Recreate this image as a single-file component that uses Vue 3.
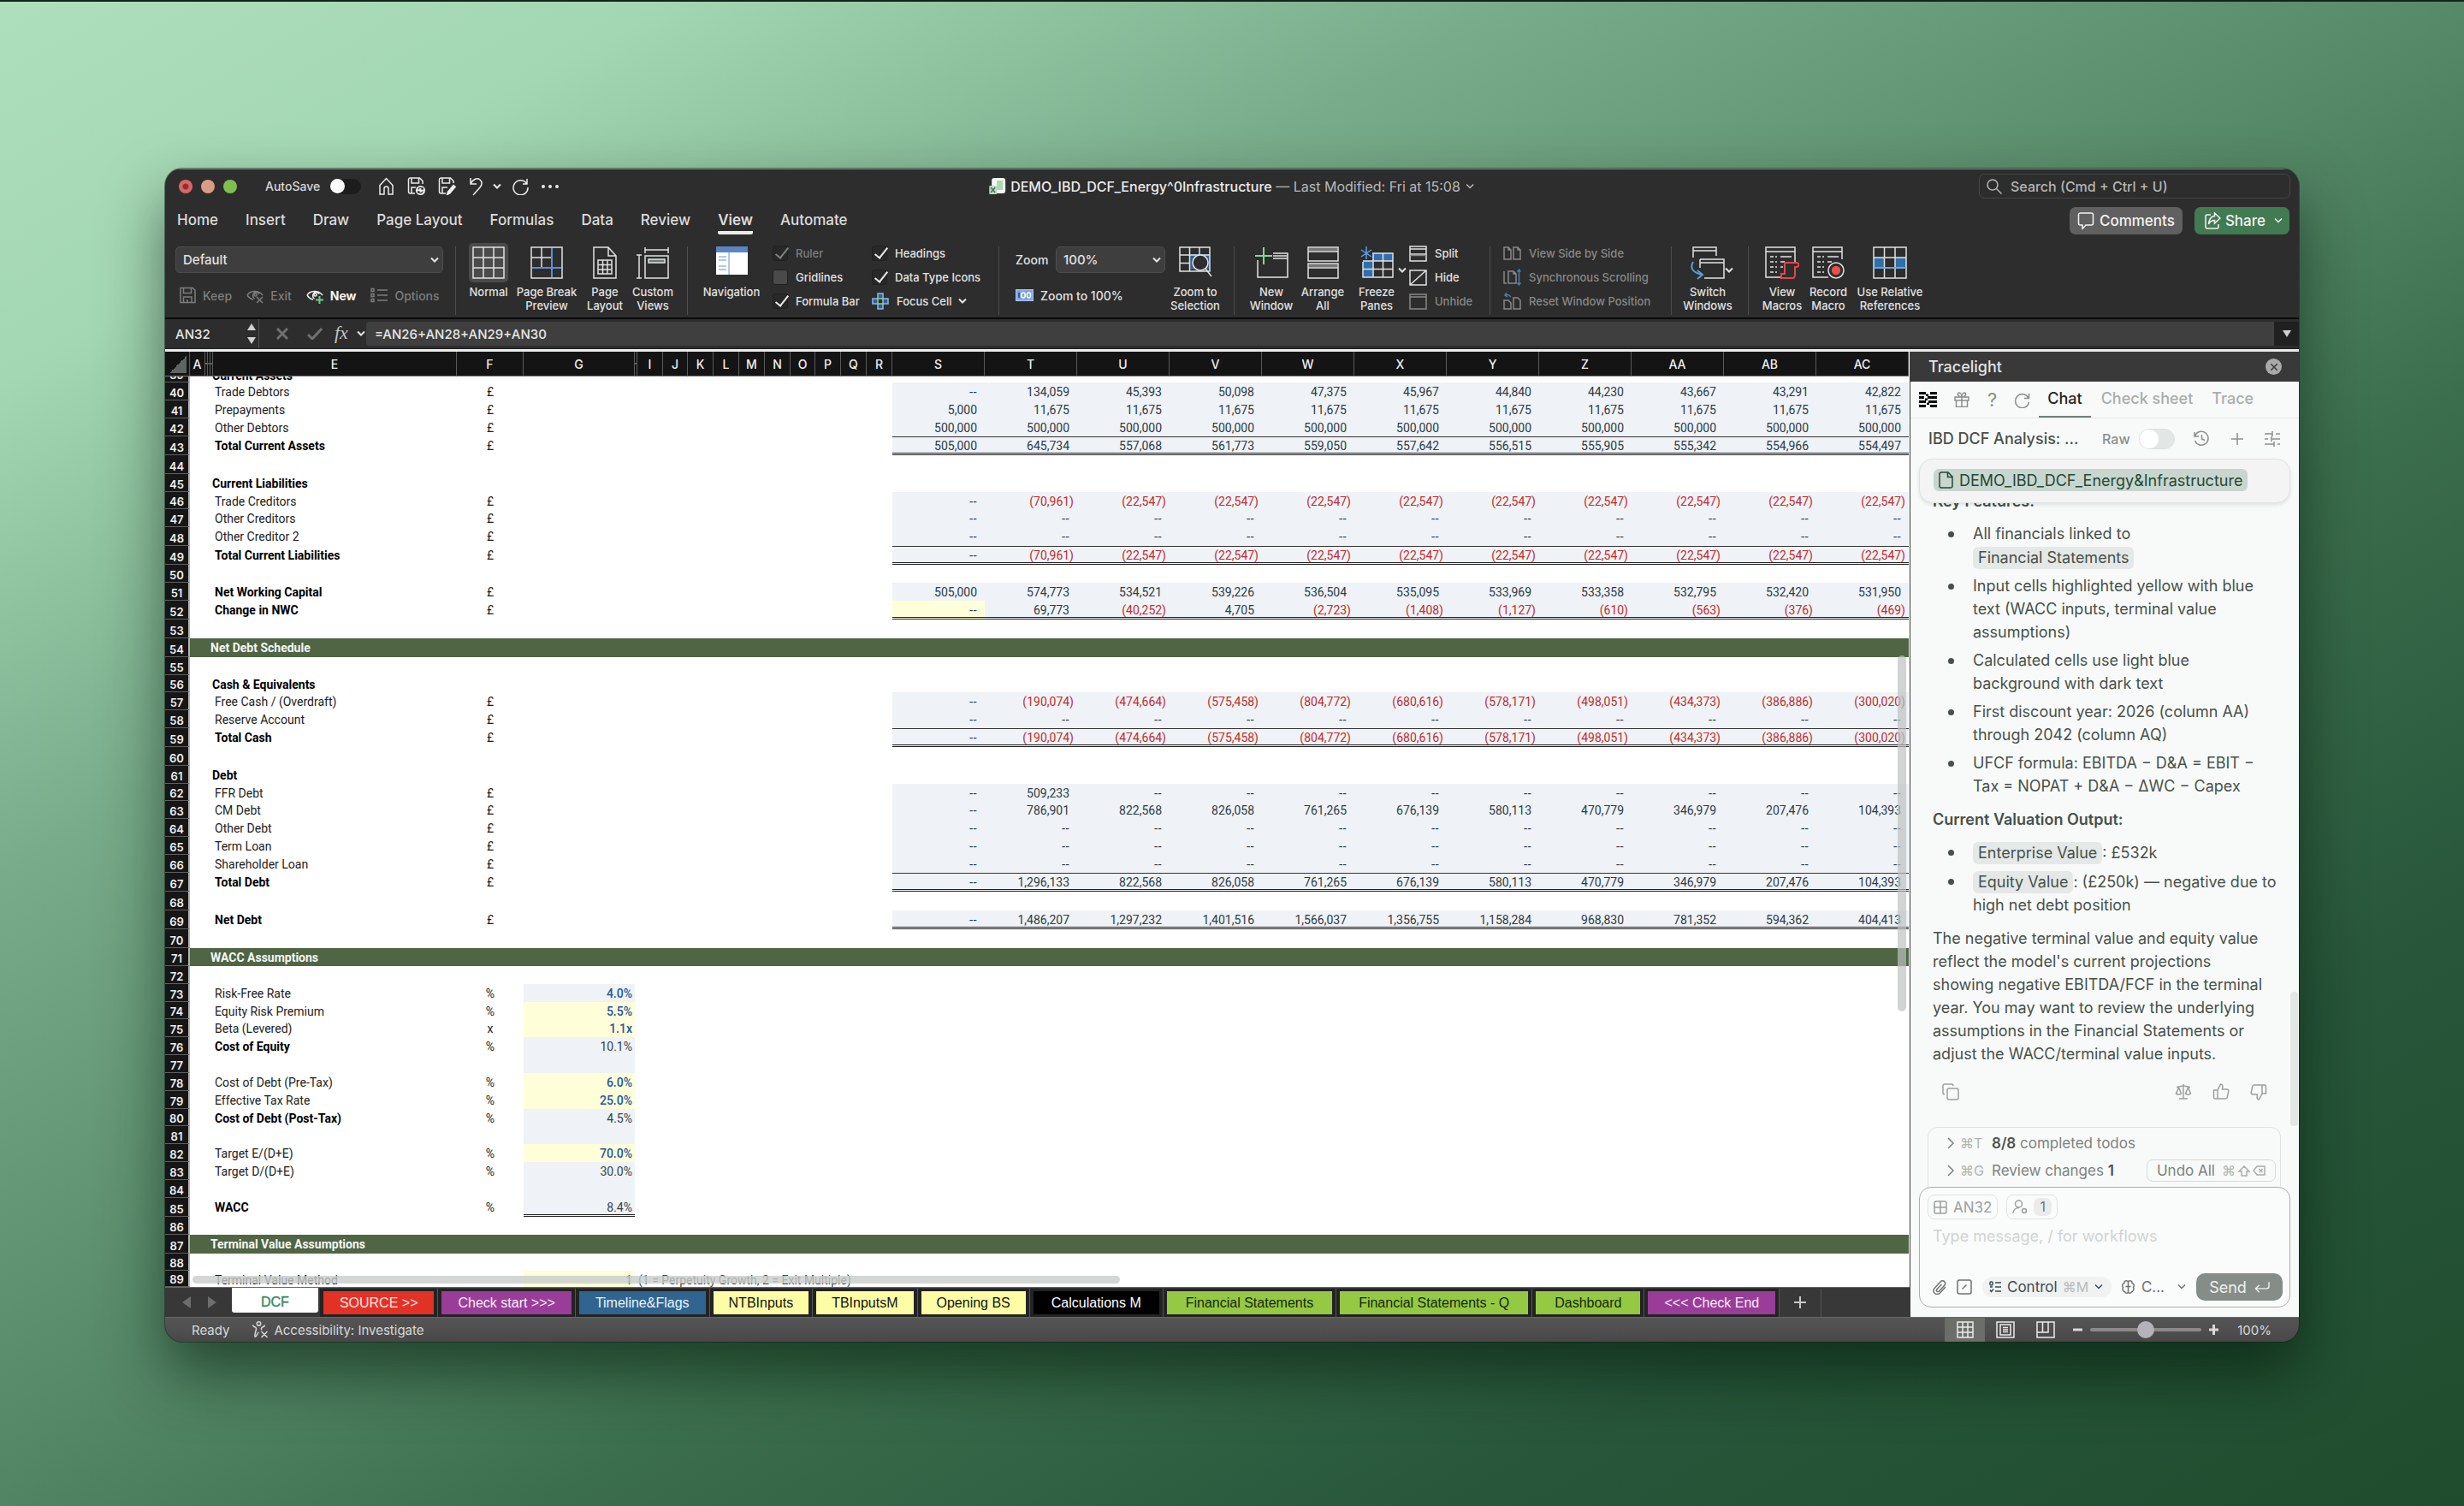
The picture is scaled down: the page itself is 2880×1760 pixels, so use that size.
<script setup>
const icons = {
  home: '<path d="M2 9.5 9.5 1.5 17 9.5V20h-5v-6.5a2.5 2.5 0 0 0-5 0V20H2Z"/>',
  save: '<path d="M9 19H3.500a2 2 0 0 1-2-2V3a2 2 0 0 1 2-2h11L18 4.500V8M5 1v6h8.500V1M5 19v-7h5"/><circle cx="15.500" cy="15.500" r="5.500" fill="#f0f0f0" stroke="none"/><path stroke="#2d2d2d" stroke-width="1.200" d="M12.700 14.500a3 3 0 0 1 5.400-.700m.200-1.600v2h-2M18.300 16.500a3 3 0 0 1-5.400.700m-.2 1.600v-2h2"/>',
  saveAs: '<path d="M9 19H3.500a2 2 0 0 1-2-2V3a2 2 0 0 1 2-2h11L18 4.500V7M5 1v6h8.500V1M5 19v-7h6"/><path fill="#f0f0f0" stroke="#f0f0f0" d="m10.500 20.500 1-3.500 6.500-7.500 2.200 1.800-6.500 7.700Z"/>',
  undo: '<path d="M2 1v7h7M2 8c3-6 8-7.500 11-5 3.500 3 2 6.500 0 9l-8 9"/>',
  redo: '<path d="M18 2v6h-5M17.500 7.500A8.500 8.500 0 1 0 19 12"/>',
  chev: '<path d="m2 3.500 4 4 4-4"/>',
  keep: '<path d="M2 1.500h14L19 4v14.500H2ZM5.500 1.500v6h9v-6M5.500 18.500V12h9.500v6.500M10 15v3"/>',
  eye: '<path d="M1 10c3-5.500 13-6.500 18 0M1 10c2 3 4 4.500 7 5M15 8.500a4 4 0 1 0-5.500 5.500"/><circle cx="10.500" cy="9.500" r="1.600"/>',
  list: '<path d="M8 4h12M8 10h12M8 16h12"/><path d="M1 2.500h3v3H1ZM1 8.500h3v3H1ZM1 14.500h3v3H1Z"/>',
  gridBig: '<path d="M1 1h36v36H1ZM13 1v36M25 1v36M1 13h36M1 25h36"/>',
  pageBreak: '<path d="M1 1h36v36H1ZM13 1v24M1 13h24"/><path stroke="#5b8fd6" stroke-width="2" d="M25 2v34M2 25h34"/>',
  pageLayout: '<path d="M1 1h17l9 10v26H1ZM18 1v10h9M6 16h16v16H6ZM11.500 16v16M17 16v16M6 21.500h16M6 27h16"/>',
  custom: '<path d="M10 4h27M10 1v7M37 1v7M3 10v27M0 10h6M0 37h6M10 11h27v26H10Z"/><path fill="#6d7a70" d="M14 15h19v4H14Z"/>',
  nav: '<path fill="#fff" stroke="none" d="M0 0h37v33H0Z"/><path fill="#5b84c4" stroke="none" d="M0 0h37v7H0Z"/><path stroke="#6d90c4" stroke-width="1" d="M15 7v26M3 12h9M3 16h9M3 23h9M3 27h9"/>',
  focus: '<path fill="#2f5f98" stroke="#8ab9ea" d="M7 1h6v6h6v6h-6v6H7v-6H1V7h6Z"/><path fill="#2d2d2d" stroke="#8fd08f" d="M7 7h6v6H7Z"/>',
  hundred: '<path fill="#7ea2dc" stroke="#a7c3f0" d="M.500.500h20v13H.500Z"/><path stroke="#1f4580" d="M4 4v6"/><rect x="7" y="4" width="4" height="6" rx="2" stroke="#fff"/><rect x="13.500" y="4" width="4" height="6" rx="2" stroke="#fff"/>',
  zoomSel: '<path fill="#2f6296" stroke="none" d="M12 9h24v18H12Z"/><path d="M1 1h35v28H1ZM12.500 1v28M24 1v9M1 10h35M1 19.500h12"/><circle cx="25" cy="19" r="9" fill="#2d2d2d" /><path d="m31 26 7 9"/>',
  newWin: '<path d="M21 8h17v28H3V16M21 14h17M21 11h17"/><path stroke="#7fd79b" stroke-width="2" d="M0 11h20M10 1v20"/>',
  arrange: '<path d="M1 1h35v16H1ZM1 20h35v17H1ZM1 6h35M1 25h35"/><path stroke="#777" stroke-width="3" d="M2 3.500h33M2 22.500h33"/>',
  freeze: '<path fill="#2f6fae" stroke="none" d="M14 8h24v9H14ZM3 17h12v19H3Z"/><path d="M14 8h24v28H3V18M3 17h35M3 26.500h35M15 8v28M26.500 8v28"/><path stroke="#5da0e6" d="M7 0v15M1 4l12 8M13 4 1 12"/>',
  split: '<path d="M1 1h19v17H1ZM1 4h19M1 10h19"/><path stroke="#888" d="M1 11.500h19"/>',
  hide: '<path d="M1 1h19v17H1ZM1 18 20 1"/>',
  unhide: '<path d="M1 1h19v17H1ZM1 4h19"/>',
  side: '<path d="M1 3h5l3 3v11H1ZM12 3h5l3 3v11h-8ZM6 3v3h3M17 3v3h3"/>',
  sync: '<path d="M1 3v14h3M6 3h6l3 3v11H6ZM12 3v3h3"/><path stroke="#4b7ca6" d="M18.500 1v18M16.500 3.500l2-2.500 2 2.500M16.500 16.500l2 2.500 2-2.500"/>',
  reset: '<path d="M1 9h5l3 3v7H1ZM12 6h5l3 3v10h-8Z"/><path stroke="#4b7ca6" d="M9 5C7 2 5 2 2 3M4 0 2 3l3 2"/>',
  switch: '<path d="M30 11V1H3v12M3 5h27M11 15h28v22H16M11 15v10M11 19h28"/><path stroke="#5b9bd5" stroke-width="2" d="M3 18c-4 7-1 12 10 15M8 28l6 5-6 5"/>',
  viewMac: '<path d="M19 36H1V1h34v18M1 6h34"/><path stroke-dasharray="4 2" d="M6 12h8M6 18h8M6 24h8M6 30h8"/><path d="M18 12h13M18 18h5M18 24h3"/><path stroke="#e0474f" stroke-width="2" d="M24 19h13c3 0 3 5 0 5h-2v9c0 5-4 4-4 4H19v-5h4V21c0-1 0-2 1-2Z"/>',
  recMac: '<path d="M19 36H1V1h34v14M1 6h34"/><path stroke-dasharray="4 2" d="M6 12h8M6 18h8M6 24h8M6 30h8"/><path d="M18 12h13M18 18h5"/><circle cx="28" cy="28" r="9" fill="#2d2d2d"/><circle cx="28" cy="28" r="4.500" fill="#e8504c" stroke="#e8504c"/>',
  relRef: '<path fill="#2f6fae" stroke="none" d="M1 13h12v12H1ZM26 13h13v12H26Z"/><path d="M1 1h38v36H1ZM13.500 1v36M26 1v36M1 13h38M1 25h38"/><path stroke="#5b9bd5" d="M1 25h38"/>',
  search: '<circle cx="7" cy="7" r="6"/><path d="m11.500 11.500 6 6"/>',
  comment: '<path d="M3.500 1h13a2 2 0 0 1 2 2v10a2 2 0 0 1-2 2H10l-4 4.500V15H3.500a2 2 0 0 1-2-2V3a2 2 0 0 1 2-2Z"/>',
  share: '<path d="M8 3H4a2 2 0 0 0-2 2v12a2 2 0 0 0 2 2h11a2 2 0 0 0 2-2v-3M12.500 1l6.500 6-6.500 6V9.500C9 9.500 7 11 5.500 14 6 8.500 8.500 5 12.500 4.500Z"/>',
  access: '<circle cx="8" cy="3" r="2.200"/><path d="M1 4.500C1 7 5 6.500 5 8.500c0 3-2.500 8-1.500 9.500 1.500 1 3-5 4.500-5M15 4.500C15 7 11 6.500 11 8.500v2M11 12l7 7M18 12l-7 7"/>',
  v1: '<path d="M1 1h18v18H1ZM7 1v18M13 1v18M1 7h18M1 13h18"/>',
  v2: '<path d="M1 1h20v18H1ZM5 4h12v12H5ZM8 7.500h6M8 10h6M8 12.500h6"/>',
  v3: '<path d="M1 1h20v18H1ZM1 13h13V1M7.500 1v12"/>',
  tl: '<path fill="#000" stroke="none" d="M0 0h8v3H0ZM13 0h8v3h-8ZM8 2.500h3V5H8ZM0 5h6v3H0ZM10 5h11v3H10ZM7 7.500h3V10H7ZM11 10h10v3H11ZM0 10h8v3H0ZM9 12.500h3V15H9ZM0 15h8v3H0ZM13 15h8v3h-8Z"/>',
  gift: '<path d="M1 6h16v4H1ZM2.500 10v7.500h13V10M9 6v11.500M9 6C4 6 3 1 6 1c2 0 3 3 3 5 0-2 1-5 3-5 3 0 2 5-3 5Z"/>',
  refresh: '<path d="M17.500 2v5.500H12M17 7.500A8 8 0 1 0 17.500 12"/>',
  history: '<path d="M1 2v5h5M1.500 6.500A8 8 0 1 1 1.500 12M9.500 5v5l3.500 1.500"/>',
  sliders: '<path d="M0 3h9M13 3h5M9 0v6M0 9h4M8 9h10M8 6v6M0 15h11M15 15h3M11 12v6"/>',
  file: '<path d="M3 1h8l5 5v11a2 2 0 0 1-2 2H3a2 2 0 0 1-2-2V3a2 2 0 0 1 2-2ZM10.500 1v5.500H16"/>',
  copy: '<rect x="6" y="6" width="13" height="13" rx="2"/><path d="M3 13a2 2 0 0 1-2-2V3a2 2 0 0 1 2-2h8a2 2 0 0 1 2 2"/>',
  scale: '<path d="M10 1v17M5 18h10M2 4.500c3 0 5-1.500 8-1.500s5 1.500 8 1.500M4.500 5l-3 7c1 1.500 5 1.500 6 0ZM15.500 5l-3 7c1 1.500 5 1.500 6 0Z"/>',
  up: '<path d="M6 8v10M1.500 8H6l3.500-7c3 0 2.500 3 2 6H17a1.800 1.800 0 0 1 1.800 2.200l-1.500 7A2 2 0 0 1 15.500 18H3a1.500 1.500 0 0 1-1.500-1.500Z"/>',
  down: '<path d="M14 12V2M18.500 12H14l-3.500 7c-3 0-2.500-3-2-6H3a1.800 1.800 0 0 1-1.800-2.200l1.500-7A2 2 0 0 1 4.500 2H17a1.500 1.500 0 0 1 1.500 1.500Z"/>',
  right: '<path d="m3 1 6 6-6 6"/>',
  shift: '<path d="M7 1 1 7h3v5h6V7h3Z"/>',
  bksp: '<path d="M5 2h9v10H5L1 7ZM7.500 5l4 4M11.500 5l-4 4"/>',
  cell: '<rect x="1" y="1" width="14" height="14" rx="2"/><path d="M8 1v14M1 8h14"/>',
  person: '<circle cx="7.500" cy="5" r="4"/><path d="M1 16c0-4 3-6.500 7-6.500"/><circle cx="14" cy="13" r="2.500"/>',
  clip: '<path d="m15 8-6.500 7C6 17.500 2.500 16.500 1.500 14.500s-.5-4 1-5.500L9 2c1.500-1.500 3.500-1.500 4.700-.200s1.200 3.200-.2 4.700L7.500 13c-.8.800-2 .8-2.700 0s-.5-1.800.2-2.500L10.500 5"/>',
  slash: '<rect x="1" y="1" width="16" height="16" rx="2"/><path d="m6.500 11.500 5-5"/>',
  ctl: '<path d="M7 3h7M7 8h7M7 13h7"/><rect x="1" y="2" width="3" height="4" rx="1"/><path d="m1 11.500 1.500 2L5 10.500M1 8h3"/>',
  brain: '<path d="M8 1.500v15M8 3C6 .500 3 2 3.500 4.500 1 5 .500 8 2 9.500.500 12 2.500 14.500 4 14.500c1 2.500 4 2 4 0M8 3c2-2.500 5-1 4.500 1.500C15 5 15.500 8 14 9.500c1.500 2.500-.5 5-2 5-1 2.500-4 2-4 0M5 8.500h6"/>',
  enter: '<path d="M18 1v5a3 3 0 0 1-3 3H2M6 4.500 1.500 9 6 13.500"/>'
}

const menu = ['Home', 'Insert', 'Draw', 'Page Layout', 'Formulas', 'Data', 'Review', 'View', 'Automate']

const columns = [
  ['A', 18], ['B', 3], ['C', 3], ['D', 3], ['E', 285], ['F', 78], ['G', 130], ['H', 3],
  ['I', 30], ['J', 29], ['K', 30], ['L', 30], ['M', 30], ['N', 30], ['O', 29], ['P', 30], ['Q', 30], ['R', 30],
  ...['S', 'T', 'U', 'V', 'W', 'X', 'Y', 'Z', 'AA', 'AB', 'AC'].map(c => [c, 108])
]

const v = s => s.split(' ')
const fill = x => Array(11).fill(x)
const T = { top: true, dbl: true, bold: true }
const rows = [
  { n: 39, h: 7, head: 'Current Assets', cut: true },
  { n: 40, h: 21, label: 'Trade Debtors', u: '£', v: v('-- 134,059 45,393 50,098 47,375 45,967 44,840 44,230 43,667 43,291 42,822') },
  { n: 41, h: 21, label: 'Prepayments', u: '£', v: ['5,000', ...Array(10).fill('11,675')] },
  { n: 42, h: 21, label: 'Other Debtors', u: '£', v: fill('500,000') },
  { n: 43, h: 22, label: 'Total Current Assets', u: '£', ...T, v: v('505,000 645,734 557,068 561,773 559,050 557,642 556,515 555,905 555,342 554,966 554,497') },
  { n: 44, h: 22 },
  { n: 45, h: 21, head: 'Current Liabilities' },
  { n: 46, h: 20, label: 'Trade Creditors', u: '£', v: ['--', '(70,961)', ...Array(9).fill('(22,547)')] },
  { n: 47, h: 21, label: 'Other Creditors', u: '£', v: fill('--') },
  { n: 48, h: 22, label: 'Other Creditor 2', u: '£', v: fill('--') },
  { n: 49, h: 22, label: 'Total Current Liabilities', u: '£', ...T, v: ['--', '(70,961)', ...Array(9).fill('(22,547)')] },
  { n: 50, h: 21 },
  { n: 51, h: 21, label: 'Net Working Capital', u: '£', bold: true, v: v('505,000 574,773 534,521 539,226 536,504 535,095 533,969 533,358 532,795 532,420 531,950') },
  { n: 52, h: 22, label: 'Change in NWC', u: '£', bold: true, dbl: true, yel: true, v: v('-- 69,773 (40,252) 4,705 (2,723) (1,408) (1,127) (610) (563) (376) (469)') },
  { n: 53, h: 22 },
  { n: 54, h: 22, band: 'Net Debt Schedule' },
  { n: 55, h: 21 },
  { n: 56, h: 20, head: 'Cash & Equivalents' },
  { n: 57, h: 21, label: 'Free Cash / (Overdraft)', u: '£', v: v('-- (190,074) (474,664) (575,458) (804,772) (680,616) (578,171) (498,051) (434,373) (386,886) (300,020)') },
  { n: 58, h: 21, label: 'Reserve Account', u: '£', v: fill('--') },
  { n: 59, h: 22, label: 'Total Cash', u: '£', ...T, v: v('-- (190,074) (474,664) (575,458) (804,772) (680,616) (578,171) (498,051) (434,373) (386,886) (300,020)') },
  { n: 60, h: 22 },
  { n: 61, h: 21, head: 'Debt' },
  { n: 62, h: 20, label: 'FFR Debt', u: '£', v: ['--', '509,233', ...Array(9).fill('--')] },
  { n: 63, h: 21, label: 'CM Debt', u: '£', v: v('-- 786,901 822,568 826,058 761,265 676,139 580,113 470,779 346,979 207,476 104,393') },
  { n: 64, h: 21, label: 'Other Debt', u: '£', v: fill('--') },
  { n: 65, h: 21, label: 'Term Loan', u: '£', v: fill('--') },
  { n: 66, h: 21, label: 'Shareholder Loan', u: '£', v: fill('--') },
  { n: 67, h: 22, label: 'Total Debt', u: '£', ...T, v: v('-- 1,296,133 822,568 826,058 761,265 676,139 580,113 470,779 346,979 207,476 104,393') },
  { n: 68, h: 22 },
  { n: 69, h: 22, label: 'Net Debt', u: '£', bold: true, dbl: true, v: v('-- 1,486,207 1,297,232 1,401,516 1,566,037 1,356,755 1,158,284 968,830 781,352 594,362 404,413') },
  { n: 70, h: 22 },
  { n: 71, h: 21, band: 'WACC Assumptions' },
  { n: 72, h: 21 },
  { n: 73, h: 21, label: 'Risk-Free Rate', u: '%', g: '4.0%', gc: 'calc blue' },
  { n: 74, h: 20, label: 'Equity Risk Premium', u: '%', g: '5.5%', gc: 'entry blue' },
  { n: 75, h: 21, label: 'Beta (Levered)', u: 'x', g: '1.1x', gc: 'entry blue' },
  { n: 76, h: 21, label: 'Cost of Equity', u: '%', bold: true, g: '10.1%', gc: 'calc' },
  { n: 77, h: 21, gc: 'calc' },
  { n: 78, h: 21, label: 'Cost of Debt (Pre-Tax)', u: '%', g: '6.0%', gc: 'entry blue' },
  { n: 79, h: 21, label: 'Effective Tax Rate', u: '%', g: '25.0%', gc: 'entry blue' },
  { n: 80, h: 20, label: 'Cost of Debt (Post-Tax)', u: '%', bold: true, g: '4.5%', gc: 'calc' },
  { n: 81, h: 21, gc: 'calc' },
  { n: 82, h: 21, label: 'Target E/(D+E)', u: '%', g: '70.0%', gc: 'entry blue' },
  { n: 83, h: 21, label: 'Target D/(D+E)', u: '%', g: '30.0%', gc: 'calc' },
  { n: 84, h: 21, gc: 'calc' },
  { n: 85, h: 22, label: 'WACC', u: '%', bold: true, g: '8.4%', gc: 'calc dbl' },
  { n: 86, h: 21 },
  { n: 87, h: 22, band: 'Terminal Value Assumptions' },
  { n: 88, h: 20 },
  { n: 89, h: 19, label: 'Terminal Value Method', g: '1', gc: 'entry blue', note: '(1 = Perpetuity Growth, 2 = Exit Multiple)' }
]

const sheets = [
  ['DCF', 'current'], ['SOURCE >>', 'red'], ['Check start >>>', 'purple'], ['Timeline&Flags', 'teal'],
  ['NTBInputs', 'yellow'], ['TBInputsM', 'yellow'], ['Opening BS', 'yellow'], ['Calculations M', 'black'],
  ['Financial Statements', 'green'], ['Financial Statements - Q', 'green'], ['Dashboard', 'green'], ['<<< Check End', 'purple']
]
</script>

<template>
  <div class="desktop">
    <div class="window">
      <header class="titlebar">
        <div class="lights"><i class="l-red"></i><i class="l-yel"></i><i class="l-grn"></i></div>
        <label class="autosave">AutoSave <input type="checkbox" class="sw dark"></label>
        <div class="quick">
          <button aria-label="Home"><svg class="ic" width="19" height="21" viewBox="0 0 19 21" v-html="icons.home" /></button>
          <button aria-label="Save"><svg class="ic" width="21" height="21" viewBox="0 0 21 21" v-html="icons.save" /></button>
          <button aria-label="Save as"><svg class="ic" width="21" height="21" viewBox="0 0 21 21" v-html="icons.saveAs" /></button>
          <button aria-label="Undo" class="undo"><svg class="ic" width="18" height="22" viewBox="0 0 18 22" v-html="icons.undo" /><svg class="ic thick" width="12" height="12" viewBox="0 0 12 12" v-html="icons.chev" /></button>
          <button aria-label="Redo"><svg class="ic" width="20" height="21" viewBox="0 0 20 21" v-html="icons.redo" /></button>
          <button aria-label="More" class="dots"><i></i><i></i><i></i></button>
        </div>
        <div class="doc">
          <svg width="20" height="20" viewBox="0 0 20 20"><rect x="3" y="0" width="16" height="18" rx="3" fill="#f3f6f3" /><rect x="9" y="3" width="7" height="11" fill="#a9d9b0" /><rect x="0" y="9" width="9" height="10" rx="1" fill="#c3d6c8" /><path d="m2 11 5 6M7 11l-5 6" stroke="#3d7a52" stroke-width="1.500" /></svg>
          <span><b>DEMO_IBD_DCF_Energy^0Infrastructure</b> — Last Modified: Fri at 15:08</span>
          <svg class="ic" width="12" height="12" viewBox="0 0 12 12" v-html="icons.chev" />
        </div>
        <label class="search"><svg class="ic" width="18" height="18" viewBox="0 0 18 18" v-html="icons.search" /><input type="text" aria-label="Search" placeholder="Search (Cmd + Ctrl + U)"></label>
      </header>

      <nav class="menubar">
        <a v-for="m in menu" :key="m" href="#" :class="{ on: m === 'View' }">{{ m }}</a>
        <div class="actions">
          <button class="comments"><svg class="ic" width="20" height="20" viewBox="0 0 20 20" v-html="icons.comment" />Comments</button>
          <button class="share"><svg class="ic" width="20" height="20" viewBox="0 0 20 20" v-html="icons.share" />Share<svg class="ic" width="12" height="12" viewBox="0 0 12 12" v-html="icons.chev" /></button>
        </div>
      </nav>

      <div class="ribbon">
        <div class="grp g1">
          <div class="selwrap"><select aria-label="Sheet view"><option>Default</option></select><svg class="ic thick" width="12" height="12" viewBox="0 0 12 12" v-html="icons.chev" /></div>
          <div class="views">
            <button class="dim"><svg class="ic" width="20" height="20" viewBox="0 0 20 20" v-html="icons.keep" />Keep</button>
            <button class="dim"><span class="eye"><svg class="ic" width="20" height="20" viewBox="0 0 20 20" v-html="icons.eye" /><svg class="ic mark" width="9" height="9" viewBox="0 0 9 9"><path d="m1 1 7 7M8 1 1 8" /></svg></span>Exit</button>
            <button class="strong"><span class="eye"><svg class="ic" width="20" height="20" viewBox="0 0 20 20" v-html="icons.eye" /><svg class="ic mark plus" width="9" height="9" viewBox="0 0 9 9"><path d="M4.500 0v9M0 4.500h9" /></svg></span>New</button>
            <button class="dim"><svg class="ic" width="20" height="20" viewBox="0 0 20 20" v-html="icons.list" />Options</button>
          </div>
        </div>
        <div class="grp g2">
          <button class="big w46"><span class="pic active"><svg class="ic" width="38" height="38" viewBox="0 0 38 38" v-html="icons.gridBig" /></span>Normal</button>
          <button class="big w90"><span class="pic"><svg class="ic" width="38" height="38" viewBox="0 0 38 38" v-html="icons.pageBreak" /></span>Page Break<br>Preview</button>
          <button class="big w46"><span class="pic"><svg class="ic" width="28" height="38" viewBox="0 0 28 38" v-html="icons.pageLayout" /></span>Page<br>Layout</button>
          <button class="big w66"><span class="pic"><svg class="ic" width="38" height="38" viewBox="0 0 38 38" v-html="icons.custom" /></span>Custom<br>Views</button>
        </div>
        <div class="grp g3">
          <button class="big w72"><span class="pic"><svg width="37" height="33" viewBox="0 0 37 33" v-html="icons.nav" fill="none" /></span>Navigation</button>
          <div class="checks c1">
            <label class="dim"><input type="checkbox" checked disabled>Ruler</label>
            <label><input type="checkbox">Gridlines</label>
            <label><input type="checkbox" checked>Formula Bar</label>
          </div>
          <div class="checks">
            <label><input type="checkbox" checked>Headings</label>
            <label><input type="checkbox" checked>Data Type Icons</label>
            <button class="focus"><svg class="ic" width="20" height="20" viewBox="0 0 20 20" v-html="icons.focus" />Focus Cell<svg class="ic thick" width="12" height="12" viewBox="0 0 12 12" v-html="icons.chev" /></button>
          </div>
        </div>
        <div class="grp g4">
          <div class="zoomcol">
            <div class="zoomrow"><label for="zoom">Zoom</label><div class="selwrap"><select id="zoom"><option>100%</option></select><svg class="ic thick" width="12" height="12" viewBox="0 0 12 12" v-html="icons.chev" /></div></div>
            <button class="z100"><svg class="ic" width="21" height="14" viewBox="0 0 21 14" v-html="icons.hundred" />Zoom to 100%</button>
          </div>
          <button class="big w66"><span class="pic"><svg class="ic" width="39" height="36" viewBox="0 0 39 36" v-html="icons.zoomSel" /></span>Zoom to<br>Selection</button>
        </div>
        <div class="grp g5">
          <button class="big w66"><span class="pic"><svg class="ic" width="39" height="38" viewBox="0 0 39 38" v-html="icons.newWin" /></span>New<br>Window</button>
          <button class="big w54"><span class="pic"><svg class="ic" width="37" height="38" viewBox="0 0 37 38" v-html="icons.arrange" /></span>Arrange<br>All</button>
          <button class="big w72"><span class="pic"><svg class="ic" width="39" height="38" viewBox="0 0 39 38" v-html="icons.freeze" /></span>Freeze<br>Panes</button>
          <svg class="ic thick drop" width="12" height="12" viewBox="0 0 12 12" v-html="icons.chev" />
          <div class="stack">
            <button><svg class="ic" width="21" height="19" viewBox="0 0 21 19" v-html="icons.split" />Split</button>
            <button><svg class="ic" width="21" height="19" viewBox="0 0 21 19" v-html="icons.hide" />Hide</button>
            <button class="dim"><svg class="ic" width="21" height="19" viewBox="0 0 21 19" v-html="icons.unhide" />Unhide</button>
          </div>
        </div>
        <div class="grp g6">
          <div class="stack">
            <button class="dim"><svg class="ic" width="21" height="20" viewBox="0 0 21 20" v-html="icons.side" />View Side by Side</button>
            <button class="dim"><svg class="ic" width="21" height="20" viewBox="0 0 21 20" v-html="icons.sync" />Synchronous Scrolling</button>
            <button class="dim"><svg class="ic" width="21" height="20" viewBox="0 0 21 20" v-html="icons.reset" />Reset Window Position</button>
          </div>
        </div>
        <div class="grp g7">
          <button class="big w66"><span class="pic"><svg class="ic" width="40" height="39" viewBox="0 0 40 39" v-html="icons.switch" /></span>Switch<br>Windows</button>
          <svg class="ic thick drop" width="12" height="12" viewBox="0 0 12 12" v-html="icons.chev" />
        </div>
        <div class="grp g8">
          <button class="big w54"><span class="pic"><svg class="ic" width="40" height="38" viewBox="0 0 40 38" v-html="icons.viewMac" /></span>View<br>Macros</button>
          <button class="big w54"><span class="pic"><svg class="ic" width="38" height="38" viewBox="0 0 38 38" v-html="icons.recMac" /></span>Record<br>Macro</button>
          <button class="big w90"><span class="pic"><svg class="ic" width="40" height="38" viewBox="0 0 40 38" v-html="icons.relRef" /></span>Use Relative<br>References</button>
        </div>
      </div>

      <div class="fbar">
        <input class="name" type="text" aria-label="Name box" value="AN32">
        <div class="steps"><i class="tu"></i><i class="td"></i></div>
        <svg class="ic fx1" width="14" height="14" viewBox="0 0 14 14"><path d="m1 1 12 12M13 1 1 13" /></svg>
        <svg class="ic fx1" width="18" height="14" viewBox="0 0 18 14"><path d="m1 8 5 5L17 1" /></svg>
        <span class="fx">fx</span>
        <svg class="ic thick" width="12" height="12" viewBox="0 0 12 12" v-html="icons.chev" />
        <input class="formula" type="text" aria-label="Formula" value="=AN26+AN28+AN29+AN30">
        <button class="expand" aria-label="Expand formula bar"><i class="td"></i></button>
      </div>

      <main class="work">
        <section class="book">
          <div class="grid">
            <table>
              <colgroup><col class="gut"><col v-for="c in columns" :key="c[0]" :style="{ width: c[1] + 'px' }"></colgroup>
              <thead>
                <tr><th class="corner"></th><th v-for="c in columns" :key="c[0]" :class="{ tiny: c[1] < 10 }">{{ c[0] }}</th></tr>
              </thead>
              <tbody>
                <tr v-for="r in rows" :key="r.n" :class="{ cut: r.cut }" :style="{ height: r.h + 'px' }">
                  <th><div>{{ r.n }}</div></th>
                  <template v-if="r.band"><td class="band"></td><td class="band title" colspan="28">{{ r.band }}</td></template>
                  <template v-else-if="r.head"><td></td><td class="head" colspan="28"><div>{{ r.head }}</div></td></template>
                  <template v-else>
                    <td></td>
                    <td class="label" :class="{ b: r.bold }" colspan="4">{{ r.label }}</td>
                    <td class="unit">{{ r.u }}</td>
                    <td class="gval" :class="r.gc">{{ r.g }}</td>
                    <td></td>
                    <td class="note" colspan="10">{{ r.note }}</td>
                    <template v-if="r.v"><td v-for="(x, i) in r.v" :key="i" class="num calc" :class="{ neg: x[0] === '(', nil: x === '--', top: r.top, dbl: r.dbl, entry: r.yel && i === 0 }">{{ x }}</td></template>
                    <td v-else colspan="11"></td>
                  </template>
                </tr>
              </tbody>
            </table>
            <div class="vbar"></div>
            <div class="hbar"></div>
          </div>
          <div class="sheets">
            <i class="tl"></i><i class="tr"></i>
            <button v-for="s in sheets" :key="s[0]" :class="s[1]"><span>{{ s[0] }}</span></button>
            <button class="add" aria-label="Add sheet"><svg class="ic" width="14" height="14" viewBox="0 0 14 14"><path d="M7 0v14M0 7h14" /></svg></button>
          </div>
        </section>

        <aside class="panel">
          <div class="phead">Tracelight<button aria-label="Close"><svg class="ic" width="8" height="8" viewBox="0 0 8 8"><path d="m0 0 8 8M8 0 0 8" /></svg></button></div>
          <div class="ptabs">
            <svg class="logo" width="21" height="18" viewBox="0 0 21 18" v-html="icons.tl" />
            <svg class="ic" width="18" height="18" viewBox="0 0 18 18" v-html="icons.gift" />
            <span class="q">?</span>
            <svg class="ic" width="19" height="19" viewBox="0 0 19 19" v-html="icons.refresh" />
            <a href="#" class="on">Chat</a><a href="#">Check sheet</a><a href="#">Trace</a>
          </div>
          <div class="pbar">
            <strong>IBD DCF Analysis: ...</strong>
            <label>Raw <input type="checkbox" class="sw light"></label>
            <div class="pacts">
              <svg class="ic" width="19" height="19" viewBox="0 0 19 19" v-html="icons.history" />
              <svg class="ic" width="14" height="14" viewBox="0 0 14 14"><path d="M7 0v14M0 7h14" /></svg>
              <svg class="ic" width="18" height="18" viewBox="0 0 18 18" v-html="icons.sliders" />
            </div>
          </div>
          <div class="filecard"><span><svg class="ic" width="17" height="20" viewBox="0 0 17 20" v-html="icons.file" />DEMO_IBD_DCF_Energy&amp;Infrastructure</span></div>
          <div class="msgs">
            <div class="msg">
              <h4>Key Features:</h4>
              <ul>
                <li>All financials linked to<br><code>Financial Statements</code></li>
                <li>Input cells highlighted yellow with blue<br>text (WACC inputs, terminal value<br>assumptions)</li>
                <li>Calculated cells use light blue<br>background with dark text</li>
                <li>First discount year: 2026 (column AA)<br>through 2042 (column AQ)</li>
                <li>UFCF formula: EBITDA − D&amp;A = EBIT −<br>Tax = NOPAT + D&amp;A − ΔWC − Capex</li>
              </ul>
              <h4>Current Valuation Output:</h4>
              <ul>
                <li><code>Enterprise Value</code>: £532k</li>
                <li><code>Equity Value</code>: (£250k) — negative due to<br>high net debt position</li>
              </ul>
              <p>The negative terminal value and equity value<br>reflect the model's current projections<br>showing negative EBITDA/FCF in the terminal<br>year. You may want to review the underlying<br>assumptions in the Financial Statements or<br>adjust the WACC/terminal value inputs.</p>
              <div class="react">
                <button aria-label="Copy"><svg class="ic" width="20" height="20" viewBox="0 0 20 20" v-html="icons.copy" /></button>
                <button aria-label="Compare" class="push"><svg class="ic" width="20" height="20" viewBox="0 0 20 20" v-html="icons.scale" /></button>
                <button aria-label="Good"><svg class="ic" width="20" height="20" viewBox="0 0 20 20" v-html="icons.up" /></button>
                <button aria-label="Bad"><svg class="ic" width="20" height="20" viewBox="0 0 20 20" v-html="icons.down" /></button>
              </div>
            </div>
            <div class="pscroll"></div>
          </div>
          <div class="todos">
            <div><svg class="ic" width="12" height="14" viewBox="0 0 12 14" v-html="icons.right" /><kbd>⌘T</kbd><span><b>8/8</b> completed todos</span></div>
            <div><svg class="ic" width="12" height="14" viewBox="0 0 12 14" v-html="icons.right" /><kbd>⌘G</kbd><span>Review changes <b>1</b></span>
              <button>Undo All <kbd>⌘</kbd><svg class="ic" width="14" height="13" viewBox="0 0 14 13" v-html="icons.shift" /><svg class="ic" width="15" height="14" viewBox="0 0 15 14" v-html="icons.bksp" /></button></div>
          </div>
          <div class="composer">
            <div class="chips">
              <button><svg class="ic" width="16" height="16" viewBox="0 0 16 16" v-html="icons.cell" />AN32</button>
              <button><svg class="ic" width="18" height="17" viewBox="0 0 18 17" v-html="icons.person" /><em>1</em></button>
            </div>
            <textarea aria-label="Message" placeholder="Type message, / for workflows"></textarea>
            <div class="tools">
              <button aria-label="Attach"><svg class="ic" width="16" height="17" viewBox="0 0 16 17" v-html="icons.clip" /></button>
              <button aria-label="Commands" class="sl"><svg class="ic" width="18" height="18" viewBox="0 0 18 18" v-html="icons.slash" /></button>
              <button class="control"><svg class="ic" width="15" height="16" viewBox="0 0 15 16" v-html="icons.ctl" />Control<kbd>⌘M</kbd><svg class="ic" width="12" height="12" viewBox="0 0 12 12" v-html="icons.chev" /></button>
              <button class="model"><svg class="ic" width="17" height="18" viewBox="0 0 16 18" v-html="icons.brain" />C...<svg class="ic" width="12" height="12" viewBox="0 0 12 12" v-html="icons.chev" /></button>
              <button class="send">Send<svg class="ic" width="18" height="14" viewBox="0 0 19 14" v-html="icons.enter" /></button>
            </div>
          </div>
        </aside>
      </main>

      <footer class="status">
        <span>Ready</span>
        <span class="acc"><svg class="ic" width="20" height="20" viewBox="0 0 19 20" v-html="icons.access" />Accessibility: Investigate</span>
        <div class="viewbtns">
          <button class="on" aria-label="Normal view"><svg class="ic" width="20" height="20" viewBox="0 0 20 20" v-html="icons.v1" /></button>
          <button aria-label="Page layout view"><svg class="ic" width="22" height="20" viewBox="0 0 22 20" v-html="icons.v2" /></button>
          <button aria-label="Page break view"><svg class="ic" width="22" height="20" viewBox="0 0 22 20" v-html="icons.v3" /></button>
        </div>
        <svg class="ic heavy" width="11" height="12" viewBox="0 0 11 12"><path d="M0 6h11" /></svg>
        <input type="range" aria-label="Zoom level" min="0" max="100" value="50">
        <svg class="ic heavy" width="11" height="12" viewBox="0 0 11 12"><path d="M0 6h11M5.500 0v12" /></svg>
        <span class="pct">100%</span>
      </footer>
    </div>
  </div>
</template>

<style>
body { margin: 0; }
</style>

<style scoped>
* { box-sizing: border-box; }
.desktop {
  min-height: 100vh; padding: 195px 193px 192px; border-top: 2px solid #14241a;
  background: linear-gradient(150deg, #addfbd 0%, #a3d6b2 13%, #78ab89 30%, #548766 50%, #3b6e4c 62%, #27563a 80%, #1f4c2c 100%);
  font-family: Inter, "Liberation Sans", sans-serif; color: #e6e6e6;
}
.window { display: flex; flex-direction: column; border-radius: 20px; overflow: hidden; background: #2d2d2d; box-shadow: 0 0 0 1px rgba(20, 30, 24, .5), 0 36px 70px rgba(0, 20, 8, .55); }
button { font: inherit; color: inherit; background: none; border: 0; padding: 0; margin: 0; white-space: nowrap; }
input, select, textarea { font: inherit; color: inherit; border: 0; outline: 0; margin: 0; }
a { color: inherit; text-decoration: none; }
svg { flex: none; display: block; }
.ic { fill: none; stroke: currentColor; stroke-width: 1.5; }
.thick { stroke-width: 2; }
.heavy { stroke-width: 3; }

.titlebar { display: flex; align-items: center; height: 40px; position: relative; border-top: 1px solid #7d8a82; }
.lights { display: flex; gap: 10px; padding-left: 16px; }
.lights i { width: 16px; height: 16px; border-radius: 50%; background: #7fbf52; }
.lights .l-red { background: radial-gradient(circle, #9e2b2b 0 3px, #d2696a 4px); }
.lights .l-yel { background: #d99c86; }
.autosave { display: flex; align-items: center; gap: 12px; margin-left: 33px; font-size: 14px; font-weight: 500; color: #d8d8d8; }
.sw { appearance: none; border-radius: 20px; position: relative; }
.sw::before { content: ""; position: absolute; left: 0; top: 0; border-radius: 50%; background: #fff; }
.sw.dark { width: 36px; height: 18px; background: #1d1d1d; }
.sw.dark::before { width: 17px; height: 17px; }
.sw.light { width: 42px; height: 24px; background: #e2e6e5; border: 1px solid #dde3e1; }
.sw.light::before { width: 22px; height: 22px; }
.quick { display: flex; align-items: center; gap: 15px; margin-left: 20px; color: #ececec; }
.undo { display: flex; align-items: center; gap: 9px; }
.quick button:nth-child(5) { margin-left: -4px; }
.dots { display: flex; gap: 4px; }
.dots i { width: 4px; height: 4px; border-radius: 50%; background: #e8e8e8; }
.doc { position: absolute; left: 50%; transform: translateX(-50%); display: flex; align-items: center; gap: 5px; font-size: 16px; color: #b9b9b9; white-space: nowrap; }
.doc b { font-weight: 500; color: #ececec; }
.search { margin-left: auto; margin-right: 10px; width: 364px; height: 29px; display: flex; align-items: center; gap: 8px; padding-left: 8px; border: 1px solid #454545; border-radius: 6px; color: #b5b5b5; }
.search input { background: none; width: 300px; font-size: 16px; font-weight: 500; }
.search input::placeholder { color: #b5b5b5; opacity: 1; }

.menubar { display: flex; align-items: flex-start; gap: 32px; height: 41px; padding: 0 11px 0 14px; font-size: 17px; font-weight: 500; color: #dcdcdc; }
.menubar a { height: 37px; line-height: 40px; border-bottom: 4px solid transparent; }
.menubar a.on { font-weight: 600; border-color: #ececec; border-radius: 2px; }
.actions { margin-left: auto; display: flex; gap: 14px; padding-top: 5px; }
.actions button { height: 32px; border-radius: 7px; display: flex; align-items: center; color: #f2f2f2; background: #606060; gap: 6px; padding: 0 9px; }
.actions .share { background: #427a52; gap: 5px; padding: 0 7px 0 11px; }
.share svg:last-child { margin-left: 4px; }

.ribbon { display: flex; height: 95px; padding-top: 10px; font-size: 13px; font-weight: 500; color: #e2e2e2; border-bottom: 2px solid #0a0a0a; }
.grp { flex: none; height: 80px; border-right: 1px solid #4d4d4d; display: flex; align-items: flex-start; }
.g1 { width: 340px; flex-direction: column; padding-left: 12px; }
.g2 { width: 271px; padding-left: 15px; }
.g3 { width: 364px; padding-left: 15px; }
.g4 { width: 275px; padding-left: 19px; }
.g5 { width: 299px; padding-left: 10px; }
.g6 { width: 212px; padding-left: 15px; }
.g7 { width: 90px; padding-left: 9px; }
.g8 { border: 0; padding-left: 12px; }
.dim { color: #7d7d7d; }
.selwrap { position: relative; }
.selwrap svg { position: absolute; right: 4px; top: 10px; }
.selwrap select { appearance: none; width: 313px; height: 31px; background: #3e3e3e; border: 1px solid #4c4c4c; border-radius: 5px; padding: 0 8px; font-size: 15px; font-weight: 500; }
.views { display: flex; align-items: center; margin-top: 16px; padding-left: 4px; gap: 17px; font-size: 14px; }
.views button { display: flex; align-items: center; gap: 8px; height: 20px; }
.strong { font-weight: 700; color: #f4f4f4; }
.eye { position: relative; }
.eye .mark { position: absolute; right: 0; bottom: 0; }
.plus { stroke: #6fd089; stroke-width: 2; }
.big { line-height: 16px; text-align: center; flex: none; display: block; }
.pic { display: flex; align-items: flex-start; justify-content: center; height: 45px; }
.pic.active { background: #4b4b4b; border-radius: 5px; margin: -4px 0 3px; padding-top: 4px; height: 46px; }
.w46 { width: 46px; }
.w54 { width: 54px; }
.w66 { width: 66px; }
.w72 { width: 72px; }
.w90 { width: 90px; }
.checks, .stack { display: flex; flex-direction: column; justify-content: space-between; height: 76px; margin-top: -2px; }
.c1 { width: 116px; margin-left: 12px; }
.checks label, .focus, .stack button { display: flex; align-items: center; gap: 9px; height: 20px; white-space: nowrap; }
.stack button.dim { color: #888; }
.checks input { appearance: none; width: 18px; height: 18px; border-radius: 3px; background: #4a4a4a; position: relative; border: 1px solid #202020; }
.checks input:checked { background: #282828; }
.checks input:checked::after { content: ""; position: absolute; left: 6px; top: -2px; width: 6px; height: 14px; border: solid #ececec; border-width: 0 2px 2px 0; transform: rotate(38deg); }
.checks .dim input::after { border-color: #808080; }
.focus svg:last-child { margin-left: -3px; }
.zoomrow { display: flex; align-items: center; gap: 8px; width: 175px; justify-content: space-between; }
.zoomrow select { width: 128px; }
.zoomrow label { font-size: 14px; }
.z100 { display: flex; align-items: center; gap: 8px; height: 20px; margin-top: 16px; font-size: 14px; }
.g4 .big { margin-left: 2px; }
.drop { margin-top: 22px; }
.g5 .drop { margin-left: -12px; margin-right: 2px; }
.g7 .drop { margin-left: -14px; }

.fbar { display: flex; align-items: center; height: 35px; border-bottom: 1px solid #1e1e1e; font-size: 15px; background: #2d2d2d; }
.name { width: 96px; height: 34px; padding-left: 12px; background: none; font-weight: 500; }
.steps { display: flex; flex-direction: column; gap: 8px; width: 14px; height: 34px; justify-content: center; border-right: 1px solid #505050; }
.tu, .td { width: 0; border: 5px solid transparent; border-top-width: 0; border-bottom: 8px solid #d0d0d0; display: block; }
.td { border-bottom-width: 0; border-top: 8px solid #d0d0d0; }
.fx1 { stroke: #707070; stroke-width: 3; margin-left: 20px; }
.fx1 + .fx1 { margin-left: 22px; }
.fx { font: italic 22px "Liberation Serif", serif; color: #c4c4c4; margin: 0 4px 3px 14px; width: 21px; }
.formula { flex: 1; height: 28px; background: #3f3f3f; padding: 0 10px; border-radius: 4px 0 0 4px; font-weight: 500; }
.expand { width: 29px; height: 28px; background: #202020; display: flex; justify-content: center; align-items: center; }

.work { display: flex; border-top: 3px solid #e9ecea; }
.book { flex: 1; min-width: 0; display: flex; flex-direction: column; }
.grid { position: relative; overflow: hidden; background: #fff; font-family: Roboto, "Liberation Sans", sans-serif; font-size: 14px; color: #1c1c1c; }
table { table-layout: fixed; width: 2038px; border-collapse: separate; border-spacing: 0; line-height: 16px; }
.gut { width: 29px; }
th, td { padding: 0; }
thead th { height: 29px; background: #141414; color: #f0f0f0; font: 500 14px Inter, sans-serif; border-right: 1px solid #5a5a5a; border-bottom: 1px solid #777; overflow: hidden; }
thead th.tiny { font-size: 2px; }
thead .corner { background: linear-gradient(135deg, transparent 50%, #5f6462 50%) 5px 5px / 20px 20px no-repeat #141414; }
tbody th { background: #161616; color: #f0f0f0; font: 600 13px/16px Inter, sans-serif; border-right: 2px solid #b4b4b4; border-bottom: 1px solid #5f5f5f; vertical-align: bottom; text-align: center; }
td { vertical-align: top; padding-top: 3px; white-space: nowrap; }
.cut td, .cut th { padding: 0; }
.cut div { height: 7px; overflow: hidden; display: flex; align-items: flex-end; }
.cut th div { height: 6px; justify-content: center; }
.band { background: #4f6543; }
.title { padding-left: 6px; color: #f6f6f6; font-weight: 700; }
.head { padding-left: 8px; font-weight: 700; color: #000; }
.cut .head { padding-left: 8px; }
.label { padding-left: 11px; }
.b { font-weight: 700; color: #000; }
.unit { text-align: center; }
.gval { text-align: right; padding-right: 3px; color: #36434e; }
.calc { background: #eff2f6; }
.entry { background: #fefed9; }
.blue { color: #1f56a0; font-weight: 500; }
.note { padding-left: 1px; color: #444; }
.num { text-align: right; padding-right: 9px; color: #2c3b48; }
.neg { color: #be2d2d; padding-right: 4px; }
.nil { font-family: "Liberation Sans", Arial, sans-serif; }
.top { border-top: 1px solid #333; padding-top: 2px; }
.dbl { border-bottom: 3px double #222; padding-top: 3px; }
.top.dbl { padding-top: 2px; }
.entry.num { background: #fefed9; }
.vbar { position: absolute; right: 4px; top: 355px; width: 10px; height: 416px; border-radius: 5px; background: rgba(190, 194, 192, .7); }
.hbar { position: absolute; left: 32px; bottom: 4px; width: 1084px; height: 9px; border-radius: 5px; background: rgba(200, 204, 202, .8); }

.sheets { display: flex; height: 35px; align-items: center; background: #383838; font: 16px "Liberation Sans", Arial, sans-serif; border-top: 1px solid #666; }
.tl, .tr { border: 7px solid transparent; border-right: 10px solid #6d6d6d; border-left-width: 0; margin-left: 20px; }
.tr { border-right-width: 0; border-left: 10px solid #6d6d6d; margin-right: 18px; }
.sheets button { height: 33px; padding: 2px 4px; background: #232323; border-right: 1px solid #555; }
.sheets button span { display: block; height: 27px; line-height: 27px; padding: 0 19px; }
.sheets .yellow span { padding: 0 18px; }
.sheets .black span { padding: 0 21px; }
.sheets .green span { padding: 0 22px; }
.sheets .current { background: #fff; height: 29px; align-self: flex-start; color: #3c8a5c; padding: 3px 15px 0; margin-right: 2px; -webkit-text-stroke: 0.4px #3c8a5c; border: 0; border-radius: 0 0 3px 3px; }
.red span { background: #e23226; color: #fbe6e2; }
.purple span { background: #993d99; color: #fbeffb; }
.teal span { background: #2f6590; color: #eef4fa; }
.yellow span { background: #fdfda6; color: #111; }
.black span { background: #000; color: #fff; }
.green span { background: #95c944; color: #13280a; }
.sheets .add { width: 49px; background: none; display: flex; align-items: center; justify-content: center; color: #c8c8c8; }
.add svg { stroke-width: 2; }

.panel { width: 455px; flex: none; background: #f8faf9; color: #47504b; display: flex; flex-direction: column; font-size: 18px; border-left: 1px solid #3a3a3a; position: relative; }
.phead { height: 35px; background: #393939; color: #e4e4e4; display: flex; align-items: center; justify-content: space-between; padding: 0 20px 0 21px; font-weight: 500; }
.phead button { width: 19px; height: 19px; border-radius: 50%; background: #a9a9a9; color: #393939; display: flex; align-items: center; justify-content: center; }
.ptabs { height: 43px; display: flex; align-items: center; border-bottom: 1px solid #e3e7e5; padding-left: 10px; color: #a9adab; font-weight: 500; }
.ptabs .ic { stroke: #8a8f8c; }
.logo { margin-right: 20px; }
.q { font-size: 22px; font-weight: 400; color: #8a8f8c; margin: 0 20px 0 21px; }
.ptabs a { margin-left: 22px; height: 42px; line-height: 40px; }
.ptabs a.on { color: #1f2522; padding: 0 10px; margin: 0 -10px 0 10px; border-bottom: 2px solid #6f8078; }
.pbar { height: 47px; display: flex; align-items: center; padding: 0 22px 0 21px; }
.pbar strong { font-weight: 500; width: 203px; white-space: nowrap; }
.pbar label { display: flex; align-items: center; gap: 10px; font-size: 16px; color: #8a8f8c; font-weight: 500; }
.pacts { flex: 1; display: flex; align-items: center; justify-content: space-between; margin-left: 22px; color: #8a8f8c; }
.filecard { margin: 0 10px; height: 52px; border: 1px solid #dfe4e2; border-radius: 16px; background: #f4f4f4; box-shadow: 0 2px 4px rgba(0, 0, 0, .1); padding: 11px 16px; position: relative; z-index: 1; }
.filecard span { display: inline-flex; align-items: center; gap: 7px; height: 26px; padding: 0 6px; background: #c9d6d0; border-radius: 6px; color: #1f4a35; white-space: nowrap; }
.msgs { flex: 1 1 0; min-height: 0; display: flex; flex-direction: column; justify-content: flex-end; overflow: hidden; position: relative; padding: 0 20px 31px 26px; line-height: 27px; }
.msg h4 { margin: 0; font-size: 18px; font-weight: 600; }
.msg ul { margin: 11px 0 12px; padding: 0 0 0 47px; display: flex; flex-direction: column; gap: 6px; list-style: none; white-space: nowrap; }
.msg li { position: relative; }
.msg li::before { content: ""; position: absolute; left: -29px; top: 11px; width: 7px; height: 7px; border-radius: 50%; background: #47504b; }
.msg code { font: inherit; display: inline-block; line-height: 26px; background: #e4e8e6; border-radius: 6px; padding: 0 6px; margin-top: 2px; }
.msg p { margin: 0; white-space: nowrap; }
.react { display: flex; margin-top: 21px; padding: 0 17px 0 11px; gap: 24px; color: #9ba09d; height: 20px; }
.push { margin-left: auto; }
.pscroll { position: absolute; right: 1px; bottom: 1px; width: 9px; height: 157px; border-radius: 4px; background: #e2e6e4; }
.todos { margin: 0 21px 0 20px; border: 1px solid #dfe3e1; border-bottom: 0; border-radius: 12px 12px 0 0; height: 70px; padding: 2px 5px 0 20px; font-size: 17px; color: #7c827f; }
.todos div { display: flex; align-items: center; height: 32px; }
.todos kbd { font: inherit; color: #b0b4b2; width: 30px; margin: 0 7px 0 5px; white-space: nowrap; }
.todos kbd, .composer kbd { font-size: 16px; }
.todos b { font-weight: 600; color: #4a524e; }
.todos button { margin-left: auto; height: 26px; border: 1px solid #d5dad8; border-radius: 7px; padding: 0 11px; display: flex; align-items: center; gap: 3px; }
.todos button kbd { width: auto; margin: 0 0 0 5px; }
.todos button svg { color: #a8adaa; }
.composer { margin: 0 10px 11px; height: 141px; border: 1px solid #a9b0ac; border-radius: 14px; background: #fafbfb; padding: 8px 8px 7px 9px; display: flex; flex-direction: column; }
.chips { display: flex; gap: 10px; font-size: 17px; color: #9ba09d; }
.chips button { height: 29px; border: 1px solid #e0e4e2; border-radius: 8px; padding: 0 6px; display: flex; align-items: center; gap: 7px; }
.chips em { font-style: normal; background: #eaeceb; border-radius: 7px; padding: 0 7px; line-height: 21px; font-size: 16px; color: #6f7a75; }
.composer textarea { background: none; resize: none; flex: 1; padding: 8px 6px 0; line-height: 24px; }
.composer textarea::placeholder { color: #d0d4d2; opacity: 1; }
.tools { display: flex; align-items: center; height: 32px; font-size: 17px; color: #6c726f; padding-left: 6px; }
.sl { margin: 0 12px; }
.control { display: flex; align-items: center; gap: 6px; height: 24px; border-radius: 12px; background: #f0f2f2; padding: 0 9px 0 8px; color: #3c4a55; }
.control kbd { font-family: inherit; color: #b8bcbb; }
.model { display: flex; align-items: center; gap: 7px; margin-left: auto; }
.model svg:last-child { margin-left: 7px; }
.send { margin-left: 11px; width: 101px; height: 32px; border-radius: 10px; background: #868d89; color: #eef1ef; display: flex; align-items: center; justify-content: center; gap: 9px; font-size: 18px; }

.status { height: 29px; background: linear-gradient(#555, #484848); display: flex; align-items: center; padding-left: 31px; font-size: 15px; color: #d8d8d8; border-top: 1px solid #666; }
.acc { display: flex; align-items: center; gap: 6px; margin-left: 26px; }
.viewbtns { display: flex; margin-left: auto; height: 28px; margin-right: 9px; color: #ececec; }
.viewbtns button { width: 47px; display: flex; align-items: center; justify-content: center; }
.viewbtns .on { background: #6c6e69; }
.status input { appearance: none; width: 130px; height: 4px; border-radius: 2px; background: #8a8a8a; margin: 0 9px; }
.status input::-webkit-slider-thumb { appearance: none; width: 20px; height: 20px; border-radius: 50%; background: #b3b3b8; }
.pct { margin: 0 32px 0 22px; }
</style>
